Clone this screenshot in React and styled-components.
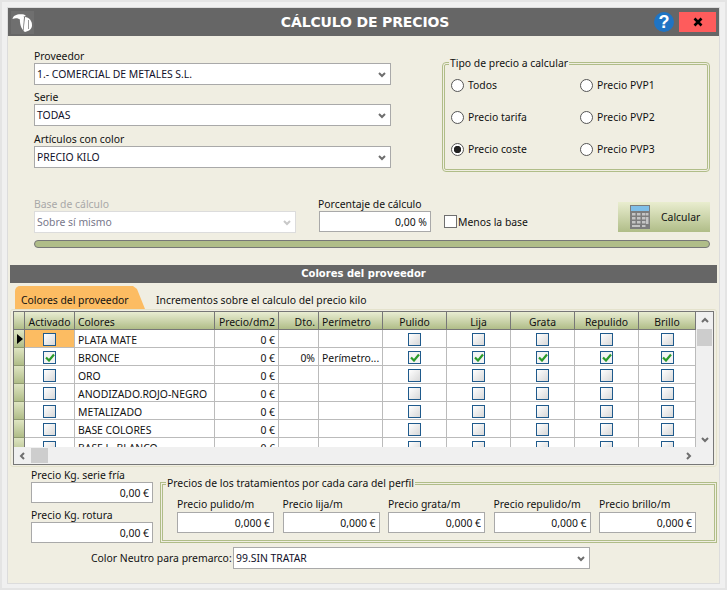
import React from 'react';
import styled, { createGlobalStyle } from 'styled-components';

const GlobalStyle = createGlobalStyle`
  html, body {
    margin: 0;
    padding: 0;
    background: #f0f0f0;
    overflow: hidden;
  }
  * { box-sizing: border-box; }
`;

const FONT = '"Noto Sans", "Open Sans", sans-serif';
const GREEN = '#b0bd88';

const Frame = styled.div`
  width: 727px;
  height: 590px;
  padding: 6px 6px 6px 6px;
  border: 2px solid #e4e4e4;
  font-family: ${FONT};
  font-size: 10.4px;
  color: #111;
`;

const Win = styled.div`
  width: 711px;
  height: 575px;
  background: #f0eee2;
  box-shadow: 0 0 0 1px #dcdcdc;
  display: flex;
  flex-direction: column;
`;

const TitleBar = styled.div`
  height: 28px;
  background: #666666;
  display: flex;
  align-items: center;
  padding: 0 3px;
  flex-shrink: 0;
`;

const Logo = styled.div`
  width: 23px;
  height: 23px;
  background: #6f6f6f;
  display: flex;
`;

const Title = styled.h1`
  flex: 1;
  margin: 0;
  padding-left: 42px;
  text-align: center;
  color: #fff;
  font-family: "DejaVu Sans", ${FONT};
  font-size: 14px;
  letter-spacing: -0.15px;
  font-weight: 700;
`;

const Help = styled.div`
  width: 20px;
  height: 20px;
  border-radius: 50%;
  background: #1f74c4;
  color: #fff;
  font-family: "Liberation Sans", sans-serif;
  font-size: 18px;
  font-weight: 700;
  line-height: 20px;
  text-align: center;
  margin-right: 5px;
`;

const Close = styled.div`
  width: 37px;
  height: 20px;
  background: #fe5c5c;
  display: flex;
  align-items: center;
  justify-content: center;
`;

const Top = styled.div`
  display: grid;
  grid-template-columns: 357px 268px;
  column-gap: 51px;
  padding: 13px 0 0 26px;
`;

const Stack = styled.div`
  display: flex;
  flex-direction: column;
`;

const Label = styled.label`
  display: block;
  height: 14px;
  line-height: 14px;
  white-space: nowrap;
  color: ${p => (p.$disabled ? '#a8a8a8' : '#111')};
  margin-top: ${p => p.$top || 0}px;
`;

const SelectBox = styled.div`
  height: ${p => p.$h || 22}px;
  width: ${p => (p.$w ? `${p.$w}px` : '100%')};
  background: #fff;
  border: 1px solid ${p => (p.$disabled ? '#dcdcdc' : '#a9a9a9')};
  color: ${p => (p.$disabled ? '#77778a' : '#10102a')};
  display: flex;
  align-items: center;
  justify-content: space-between;
  padding: 0 4px 1px 2px;
`;

const Group = styled.fieldset`
  margin: ${p => p.$top || 0}px 0 0;
  padding: 0;
  min-width: 0;
  border: 3px double ${GREEN};
  border-radius: ${p => p.$radius || 0}px;
  height: ${p => p.$h}px;
`;

const Legend = styled.legend`
  padding: 0 1px;
  margin-left: ${p => p.$left || 4}px;
  height: 14px;
  line-height: 14px;
`;

const RadioGrid = styled.div`
  display: grid;
  grid-template-columns: 129px 1fr;
  grid-auto-rows: 32px;
  margin-top: -1px;
  padding-left: 6px;
`;

const RadioRow = styled.label`
  display: flex;
  align-items: center;
  gap: 4px;
  height: 32px;
`;

const Radio = styled.input.attrs({ type: 'radio', readOnly: true })`
  appearance: none;
  margin: 0;
  width: 13px;
  height: 13px;
  border-radius: 50%;
  border: 1px solid #555;
  background: #fff;
  &:checked {
    background: radial-gradient(circle, #222 0, #222 3.4px, #fff 4px);
  }
`;

const CalcRow = styled.div`
  display: flex;
  align-items: flex-end;
  padding: 25px 0 0 26px;
`;

const BaseField = styled.div`
  width: 262px;
`;

const PercentField = styled.div`
  width: 113px;
  margin-left: 22px;
  padding-bottom: 1px;
`;

const NumInput = styled.input.attrs({ readOnly: true })`
  display: block;
  width: ${p => (p.$w ? `${p.$w}px` : '100%')};
  height: 21px;
  margin: ${p => (p.$shift ? '0 0 0 1px' : '0')};
  padding: 0 3px;
  border: 1px solid #a9a9a9;
  background: #fff;
  text-align: right;
  font: inherit;
  color: #111;
  outline: none;
`;

const MenosLabel = styled.label`
  display: flex;
  align-items: center;
  gap: 1px;
  margin-left: 13px;
  height: 22px;
  padding-bottom: 1px;
  white-space: nowrap;
`;

const PlainBox = styled.span`
  display: block;
  width: 13px;
  height: 13px;
  border: 1px solid #6f6f6f;
  background: #fff;
`;

const CalcButton = styled.button`
  width: 92px;
  height: 30px;
  margin: 0 9px 1px auto;
  padding: 0 0 1px 12px;
  border: none;
  background: linear-gradient(#e9edcf, ${GREEN});
  display: flex;
  align-items: center;
  gap: 11px;
  font: inherit;
  color: #111;
`;

const Progress = styled.div`
  height: 8px;
  margin: 7px 9px 0 26px;
  background: ${GREEN};
  border: 1px solid #777;
  border-radius: 4px;
`;

const SectionBar = styled.div`
  height: 18px;
  margin: 17px 2px 0;
  background: #666666;
  color: #fff;
  text-align: center;
  font-family: "DejaVu Sans", ${FONT};
  font-size: 10px;
  font-weight: 700;
  line-height: 18px;
`;

const Tabs = styled.div`
  display: flex;
  height: 23px;
  margin-top: 3px;
  padding-left: 7px;
  align-items: flex-end;
`;

const Tab = styled.div`
  height: 23px;
  line-height: 28px;
  white-space: nowrap;
  ${p => p.$active && `
    width: 130px;
    padding-left: 6px;
    background: #fcbc62;
    border-radius: 5px 0 0 0;
    clip-path: polygon(0 0, 118px 0, 122px 3px, 130px 100%, 0 100%);
  `}
  ${p => !p.$active && 'margin-left: 11px;'}
`;

const Panel = styled.div`
  height: 158px;
  margin: 0 2px;
  padding: 1px 2px 0 2px;
  border: 1px solid #e4e2cc;
  border-radius: 3px;
`;

const Table = styled.div`
  width: 701px;
  height: 154px;
  border: 1px solid #777;
  display: grid;
  grid-template-columns: 682px 17px;
  grid-template-rows: 135px 17px;
  background: #f0f0f0;
`;

const Viewport = styled.div`
  overflow: hidden;
  background: #fff;
`;

const COLUMNS = '11px 50px 140px 64px 40px 64px 64px 64px 64px 64px 57px';

const HeadRow = styled.div`
  display: grid;
  grid-template-columns: ${COLUMNS};
  height: 18px;
  border-bottom: 1px solid #777;
  background: linear-gradient(#e9edd2, ${GREEN});
`;

const HeadCell = styled.div`
  border-right: 1px solid #777;
  line-height: 20px;
  white-space: nowrap;
  overflow: hidden;
  text-align: ${p => p.$align || 'center'};
  padding: ${p => (p.$align === 'right' ? '0 3px 0 0' : p.$align === 'left' ? '0 0 0 3px' : '0')};
`;

const BodyRow = styled.div`
  display: grid;
  grid-template-columns: ${COLUMNS};
  height: 18px;
`;

const Indicator = styled.div`
  border-right: 1px solid #777;
  border-bottom: 1px solid #8f9a70;
  background: linear-gradient(#dfe5c2, ${GREEN});
  padding: 3px 0 0 3px;
`;

const Cell = styled.div`
  border-right: 1px solid #bbb;
  border-bottom: 1px solid #bbb;
  line-height: 20px;
  white-space: nowrap;
  overflow: hidden;
  background: ${p => (p.$selected ? '#fcbc62' : '#fff')};
  text-align: ${p => p.$align || 'left'};
  padding: ${p => (p.$align === 'right' ? '0 3px 0 0' : '0 0 0 3px')};
  ${p => p.$center && `
    display: flex;
    align-items: center;
    justify-content: center;
    padding: 2px 0 0;
  `}
`;

const CheckBox = styled.span`
  width: 13px;
  height: 13px;
  border: 1px solid #1f5a8c;
  background: ${p => (p.$checked ? '#f4f4f4' : 'linear-gradient(135deg, #fff, #d8d8d8)')};
  display: flex;
  align-items: center;
  justify-content: center;
`;

const VScroll = styled.div`
  display: flex;
  flex-direction: column;
  background: #f0f0f0;
`;

const HScroll = styled.div`
  display: flex;
  align-items: center;
  background: #f0f0f0;
  grid-column: 1 / 2;
`;

const ScrollBtn = styled.div`
  width: 17px;
  height: 17px;
  display: flex;
  align-items: center;
  justify-content: center;
  flex-shrink: 0;
`;

const ThumbV = styled.div`
  width: 15px;
  height: 17px;
  margin-left: 1px;
  background: #cdcdcd;
`;

const ThumbH = styled.div`
  width: 17px;
  height: 15px;
  background: #cdcdcd;
`;

const Spacer = styled.div`
  flex: 1;
`;

const Bottom = styled.div`
  display: grid;
  grid-template-columns: 122px 557px;
  column-gap: 7px;
  padding-left: 23px;
`;

const KgField = styled.div`
  margin-top: ${p => p.$top || 0}px;
`;

const TreatGrid = styled.div`
  display: grid;
  grid-template-columns: repeat(5, 97px);
  column-gap: 8.5px;
  padding: 7px 0 0 14px;
`;

const TreatLabel = styled(Label)`
  margin-bottom: 1px;
`;

const NeutroRow = styled.div`
  display: flex;
  align-items: center;
  padding: 4px 0 0 83px;
`;

const NeutroLabel = styled.label`
  width: 142px;
  white-space: nowrap;
`;

const Chevron = ({ color = '#6e6e6e', up, left, right }) => {
  const points = up
    ? '1,5 4,2 7,5'
    : left
      ? '5,1 2,4 5,7'
      : right
        ? '3,1 6,4 3,7'
        : '1,3 4,6 7,3';
  return (
    <svg width="8" height="8" viewBox="0 0 8 8">
      <polyline points={points} fill="none" stroke={color} strokeWidth="2" />
    </svg>
  );
};

const Tick = () => (
  <svg width="10" height="9" viewBox="0 0 10 9">
    <polyline points="1,4.5 4,7.5 9,1.5" fill="none" stroke="#2a9a2a" strokeWidth="2.2" />
  </svg>
);

const Toucan = () => (
  <svg width="23" height="23" viewBox="0 0 23 23">
    <path d="M1.5 8 C2 4 7 2.5 13 3.5 L15 5 C12 5.5 10.5 6.5 9.5 9 C7.5 7 4.5 6.5 1.5 8 Z" fill="#fff" />
    <path d="M9 7.5 C10 6 12 5.5 13 6 L12 19 C10 17 8.5 12 9 7.5 Z" fill="#fff" />
    <path d="M14 6 C18 6 21 10 21 14 C21 18 18 20 14 21 L12.5 20 Z" fill="#fff" />
    <rect x="17" y="9" width="1" height="9" fill="#999" />
  </svg>
);

const CalcIcon = () => (
  <svg width="20" height="24" viewBox="0 0 20 24">
    <rect width="20" height="24" fill="#7d7d7d" />
    <rect x="1" y="1" width="18" height="5" fill="#7fbfe8" />
    {[8, 12, 16].map(y =>
      [2, 7, 12].map(x => <rect key={`${x}-${y}`} x={x} y={y} width="3.5" height="2.5" fill="#c4c4c4" />)
    )}
    <rect x="16" y="8" width="2.5" height="2.5" fill="#c4c4c4" />
    <rect x="16" y="12" width="2.5" height="7" fill="#c4c4c4" />
    <rect x="2" y="20" width="8" height="2" fill="#c4c4c4" />
    <rect x="12" y="20" width="3.5" height="2" fill="#c4c4c4" />
  </svg>
);

const Dropdown = ({ children, disabled, w, h }) => (
  <SelectBox $disabled={disabled} $w={w} $h={h}>
    <span>{children}</span>
    <Chevron color={disabled ? '#c8c8c8' : '#6e6e6e'} />
  </SelectBox>
);

const RADIOS = [
  ['Todos', 'Precio PVP1'],
  ['Precio tarifa', 'Precio PVP2'],
  ['Precio coste', 'Precio PVP3'],
];

const TREATMENTS = ['Pulido', 'Lija', 'Grata', 'Repulido', 'Brillo'];

const ROWS = [
  { name: 'PLATA MATE' },
  { name: 'BRONCE', on: true, dto: '0%', per: 'Perímetro...' },
  { name: 'ORO' },
  { name: 'ANODIZADO.ROJO-NEGRO' },
  { name: 'METALIZADO' },
  { name: 'BASE COLORES' },
  { name: 'BASE L. BLANCO' },
];

const PRICES = ['Precio pulido/m', 'Precio lija/m', 'Precio grata/m', 'Precio repulido/m', 'Precio brillo/m'];

const Check = ({ on }) => <CheckBox $checked={on}>{on && <Tick />}</CheckBox>;

const App = () => (
  <>
    <GlobalStyle />
    <Frame>
      <Win>
        <TitleBar>
          <Logo><Toucan /></Logo>
          <Title>CÁLCULO DE PRECIOS</Title>
          <Help>?</Help>
          <Close>
            <svg width="10" height="10" viewBox="0 0 10 10">
              <path d="M1.5 1.5 L8.5 8.5 M8.5 1.5 L1.5 8.5" stroke="#000" strokeWidth="2.6" />
            </svg>
          </Close>
        </TitleBar>

        <Top>
          <Stack>
            <Label>Proveedor</Label>
            <Dropdown>1.- COMERCIAL DE METALES S.L.</Dropdown>
            <Label $top={5}>Serie</Label>
            <Dropdown>TODAS</Dropdown>
            <Label $top={6}>Artículos con color</Label>
            <Dropdown>PRECIO KILO</Dropdown>
          </Stack>
          <Group $top={7} $h={116} $radius={4}>
            <Legend>Tipo de precio a calcular</Legend>
            <RadioGrid>
              {RADIOS.flat().map(text => (
                <RadioRow key={text}>
                  <Radio name="tipo" defaultChecked={text === 'Precio coste'} />
                  {text}
                </RadioRow>
              ))}
            </RadioGrid>
          </Group>
        </Top>

        <CalcRow>
          <BaseField>
            <Label $disabled>Base de cálculo</Label>
            <Dropdown disabled>Sobre sí mismo</Dropdown>
          </BaseField>
          <PercentField>
            <Label>Porcentaje de cálculo</Label>
            <NumInput $w={112} $shift value="0,00 %" />
          </PercentField>
          <MenosLabel>
            <PlainBox />
            Menos la base
          </MenosLabel>
          <CalcButton>
            <CalcIcon />
            Calcular
          </CalcButton>
        </CalcRow>

        <Progress />
        <SectionBar>Colores del proveedor</SectionBar>

        <Tabs>
          <Tab $active>Colores del proveedor</Tab>
          <Tab>Incrementos sobre el calculo del precio kilo</Tab>
        </Tabs>

        <Panel>
          <Table>
            <Viewport>
              <HeadRow>
                <HeadCell />
                <HeadCell>Activado</HeadCell>
                <HeadCell $align="left">Colores</HeadCell>
                <HeadCell $align="right">Precio/dm2</HeadCell>
                <HeadCell $align="right">Dto.</HeadCell>
                <HeadCell $align="left">Perímetro</HeadCell>
                {TREATMENTS.map(t => <HeadCell key={t}>{t}</HeadCell>)}
              </HeadRow>
              {ROWS.map((row, i) => (
                <BodyRow key={row.name}>
                  <Indicator>
                    {i === 0 && (
                      <svg width="6" height="10" viewBox="0 0 6 10">
                        <polygon points="0,0 6,5 0,10" fill="#000" />
                      </svg>
                    )}
                  </Indicator>
                  <Cell $center $selected={i === 0}><Check on={row.on} /></Cell>
                  <Cell>{row.name}</Cell>
                  <Cell $align="right">0 €</Cell>
                  <Cell $align="right">{row.dto}</Cell>
                  <Cell>{row.per}</Cell>
                  {TREATMENTS.map(t => (
                    <Cell key={t} $center><Check on={row.on} /></Cell>
                  ))}
                </BodyRow>
              ))}
            </Viewport>
            <VScroll>
              <ScrollBtn><Chevron up /></ScrollBtn>
              <ThumbV />
              <Spacer />
              <ScrollBtn><Chevron /></ScrollBtn>
            </VScroll>
            <HScroll>
              <ScrollBtn><Chevron left /></ScrollBtn>
              <ThumbH />
              <Spacer />
              <ScrollBtn><Chevron right /></ScrollBtn>
            </HScroll>
          </Table>
        </Panel>

        <Bottom>
          <Stack>
            <KgField $top={1}>
              <Label>Precio Kg. serie fría</Label>
              <NumInput value="0,00 €" />
            </KgField>
            <KgField $top={5}>
              <Label>Precio Kg. rotura</Label>
              <NumInput value="0,00 €" />
            </KgField>
          </Stack>
          <Group $top={9} $h={67}>
            <Legend $left={3}>Precios de los tratamientos por cada cara del perfil</Legend>
            <TreatGrid>
              {PRICES.map(text => (
                <div key={text}>
                  <TreatLabel>{text}</TreatLabel>
                  <NumInput value="0,000 €" />
                </div>
              ))}
            </TreatGrid>
          </Group>
        </Bottom>

        <NeutroRow>
          <NeutroLabel>Color Neutro para premarco:</NeutroLabel>
          <Dropdown w={357} h={22}>99.SIN TRATAR</Dropdown>
        </NeutroRow>
      </Win>
    </Frame>
  </>
);

export default App;
